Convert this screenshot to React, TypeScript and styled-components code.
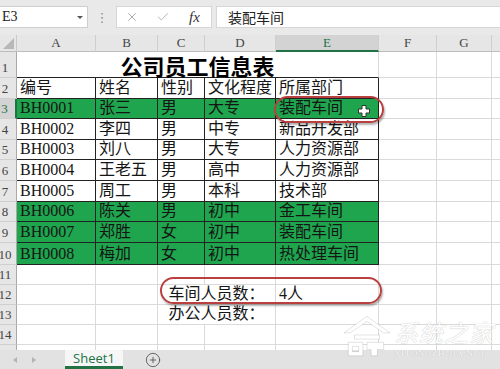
import React from "react";
import styled, { createGlobalStyle } from "styled-components";
import { X, Check, CirclePlus } from "lucide-react";

const GlobalStyle = createGlobalStyle`
	html, body {
		margin: 0;
		padding: 0;
		background: #fff;
	}
	body {
		font-family: "Liberation Serif", "Noto Sans CJK SC", serif;
	}
`;

const Window = styled.div`
	position: relative;
	width: 500px;
	height: 369px;
	display: flex;
	flex-direction: column;
	overflow: hidden;
	background: #fff;
`;

// ---------- formula bar ----------
const FormulaBar = styled.div`
	height: 35px;
	flex-shrink: 0;
	box-sizing: border-box;
	padding-top: 6px;
	background: #e9e9e9;
	display: flex;
	align-items: flex-start;
`;

const NameBox = styled.div`
	width: 88px;
	height: 22px;
	box-sizing: border-box;
	background: #fff;
	border: 1px solid #cfcfcf;
	border-left: 0;
	display: flex;
	align-items: center;
	justify-content: space-between;
	padding: 0 4px 0 2px;
	font-size: 14px;
	color: #222;
`;

const DropArrow = styled.span`
	width: 0;
	height: 0;
	border-left: 3px solid transparent;
	border-right: 3px solid transparent;
	border-top: 3px solid #555;
`;

const Grip = styled.div`
	width: 28px;
	height: 22px;
	display: flex;
	align-items: center;
	justify-content: center;
	color: #8a8a8a;
	font-size: 13px;
	font-family: "DejaVu Sans", sans-serif;
`;

const FxBox = styled.div`
	width: 96px;
	height: 22px;
	box-sizing: border-box;
	background: #fff;
	border: 1px solid #d6d6d6;
	display: flex;
	align-items: center;
	padding-left: 8px;
	gap: 17px;
	color: #9a9a9a;
`;

const FxLabel = styled.span`
	font-family: "Liberation Serif", serif;
	font-style: italic;
	font-size: 15px;
	color: #333;
	margin-left: 2px;
`;

const FormulaInput = styled.div`
	flex: 1;
	height: 22px;
	margin-left: 4px;
	box-sizing: border-box;
	background: #fff;
	border: 1px solid #d6d6d6;
	border-right: 0;
	display: flex;
	align-items: center;
	padding-left: 11px;
	font-size: 14px;
	font-family: "Noto Sans CJK SC", sans-serif;
	color: #222;
`;

// ---------- sheet ----------
const SheetArea = styled.div`
	position: relative;
	flex: 1;
	overflow: hidden;
`;

const Grid = styled.div`
	display: grid;
	grid-template-columns: 17px 79px 62px 47px 71px 103px 58px 55px 60px;
	grid-template-rows: 17px 26px 21px 20px 21px 20px 21px 21px 20px 21px 22px 20px 20px 20px 20px 20px;
`;

const Corner = styled.div`
	position: relative;
	background: #e6e6e6;
	border-right: 1px solid #c9c9c9;
	border-bottom: 1px solid #bdbdbd;
	box-sizing: border-box;
	&::after {
		content: "";
		position: absolute;
		right: 2px;
		bottom: 2px;
		border-left: 11px solid transparent;
		border-bottom: 11px solid #b8b8b8;
	}
`;

const ColHead = styled.div<{ $active?: boolean }>`
	box-sizing: border-box;
	background: ${(p) => (p.$active ? "#d3d3d3" : "#e6e6e6")};
	border-right: 1px solid #cfcfcf;
	border-bottom: ${(p) => (p.$active ? "2px solid #217346" : "1px solid #bdbdbd")};
	display: flex;
	align-items: center;
	justify-content: center;
	font-size: 13px;
	color: ${(p) => (p.$active ? "#217346" : "#444")};
`;

const RowHead = styled.div<{ $active?: boolean }>`
	box-sizing: border-box;
	background: ${(p) => (p.$active ? "#d3d3d3" : "#e6e6e6")};
	border-right: ${(p) => (p.$active ? "2px solid #217346" : "1px solid #a9a9a9")};
	border-bottom: 1px solid #cfcfcf;
	display: flex;
	align-items: flex-end;
	justify-content: center;
	padding: 0 6px 1px 0;
	font-size: 13px;
	line-height: 16px;
	color: ${(p) => (p.$active ? "#217346" : "#444")};
`;

const Cell = styled.div<{ $span?: number; $boxed?: boolean; $green?: boolean; $center?: boolean }>`
	grid-column: span ${(p) => p.$span ?? 1};
	box-sizing: border-box;
	min-width: 0;
	border-right: 1px solid ${(p) => (p.$boxed ? "#222" : "#dadada")};
	border-bottom: 1px solid ${(p) => (p.$boxed ? "#222" : "#dadada")};
	background: ${(p) => (p.$green ? "#1ea54e" : "#fff")};
	display: flex;
	align-items: flex-end;
	justify-content: ${(p) => (p.$center ? "center" : "flex-start")};
	padding: 0 3px 1px;
	font-size: 16px;
	line-height: 18px;
	white-space: nowrap;
	color: #151515;
`;

const TitleCell = styled.div`
	grid-column: span 5;
	box-sizing: border-box;
	border-right: 1px solid #dadada;
	border-bottom: 1px solid #222;
	display: flex;
	align-items: flex-end;
	justify-content: center;
	font-family: "Noto Sans CJK SC", sans-serif;
	font-weight: 700;
	font-size: 22px;
	line-height: 24px;
	color: #000;
`;

const Ring = styled.div<{ $x: number; $y: number; $w: number; $h: number }>`
	position: absolute;
	left: ${(p) => p.$x}px;
	top: ${(p) => p.$y}px;
	width: ${(p) => p.$w}px;
	height: ${(p) => p.$h}px;
	box-sizing: border-box;
	border: 2px solid #b9403f;
	border-radius: 14px;
	box-shadow: 1px 2px 2px rgba(0, 0, 0, 0.3);
	pointer-events: none;
`;

const Cursor = styled.svg`
	position: absolute;
	left: 358px;
	top: 70px;
`;

// ---------- tabs ----------
const TabBar = styled.div`
	height: 19px;
	flex-shrink: 0;
	background: #e2e2e2;
	display: flex;
	align-items: stretch;
`;

const NavArrows = styled.div`
	width: 65px;
	display: flex;
	align-items: center;
	padding-left: 13px;
	gap: 15px;
	box-sizing: border-box;
`;

const Tri = styled.span<{ $dir: "left" | "right" }>`
	width: 0;
	height: 0;
	border-top: 3px solid transparent;
	border-bottom: 3px solid transparent;
	${(p) => (p.$dir === "left" ? "border-right: 4px solid #b4b4b4;" : "border-left: 4px solid #b4b4b4;")}
`;

const SheetTab = styled.div`
	width: 58px;
	box-sizing: border-box;
	background: #f6f6f6;
	border-bottom: 3px solid #217346;
	display: flex;
	align-items: center;
	justify-content: center;
	font-family: "Open Sans", "Liberation Sans", sans-serif;
	font-size: 13px;
	color: #217346;
`;

const AddSheet = styled.div`
	width: 60px;
	display: flex;
	align-items: center;
	justify-content: center;
	color: #555;
`;

// ---------- watermark ----------
const Watermark = styled.div`
	position: absolute;
	left: 342px;
	top: 314px;
	display: flex;
	align-items: flex-start;
	gap: 2px;
	color: #fff;
	pointer-events: none;
`;

const MarkText = styled.div`
	display: flex;
	flex-direction: column;
	padding-top: 5px;
`;

const MarkName = styled.span`
	font-family: "Noto Sans CJK SC", sans-serif;
	font-size: 24px;
	line-height: 26px;
	font-style: italic;
	letter-spacing: 1px;
	text-shadow: 0 0 1px rgba(0, 0, 0, 0.35);
`;

const MarkUrl = styled.span`
	font-family: "Liberation Serif", serif;
	font-size: 9px;
	letter-spacing: 0.6px;
	margin-top: 3px;
	text-shadow: 0 0 1px rgba(0, 0, 0, 0.3);
`;

type Row = { n: number; cells: string[]; green?: boolean };

const header = ["编号", "姓名", "性别", "文化程度", "所属部门"];

const rows: Row[] = [
	{ n: 3, cells: ["BH0001", "张三", "男", "大专", "装配车间"], green: true },
	{ n: 4, cells: ["BH0002", "李四", "男", "中专", "新品开发部"] },
	{ n: 5, cells: ["BH0003", "刘八", "男", "大专", "人力资源部"] },
	{ n: 6, cells: ["BH0004", "王老五", "男", "高中", "人力资源部"] },
	{ n: 7, cells: ["BH0005", "周工", "男", "本科", "技术部"] },
	{ n: 8, cells: ["BH0006", "陈关", "男", "初中", "金工车间"], green: true },
	{ n: 9, cells: ["BH0007", "郑胜", "女", "初中", "装配车间"], green: true },
	{ n: 10, cells: ["BH0008", "梅加", "女", "初中", "热处理车间"], green: true },
];

// the H header sits past the window edge, so its letter is not drawn
const letters = ["A", "B", "C", "D", "E", "F", "G", ""];

const Blank = ({ count }: { count: number }) => (
	<>
		{Array.from({ length: count }).map((_, i) => (
			<Cell key={i} />
		))}
	</>
);

export default function App() {
	return (
		<>
			<GlobalStyle />
			<Window>
				<FormulaBar>
					<NameBox>
						<span>E3</span>
						<DropArrow />
					</NameBox>
					<Grip>⋮</Grip>
					<FxBox>
						<X size={14} strokeWidth={1.4} />
						<Check size={14} strokeWidth={1.6} color="#b0b0b0" />
						<FxLabel>fx</FxLabel>
					</FxBox>
					<FormulaInput>装配车间</FormulaInput>
				</FormulaBar>

				<SheetArea>
					<Grid>
						<Corner />
						{letters.map((l, i) => (
							<ColHead key={i} $active={l === "E"}>
								{l}
							</ColHead>
						))}

						<RowHead>1</RowHead>
						<TitleCell>公司员工信息表</TitleCell>
						<Blank count={3} />

						<RowHead>2</RowHead>
						{header.map((h) => (
							<Cell key={h} $boxed>
								{h}
							</Cell>
						))}
						<Blank count={3} />

						{rows.map((r) => (
							<React.Fragment key={r.n}>
								<RowHead $active={r.n === 3}>{r.n}</RowHead>
								{r.cells.map((c, i) => (
									<Cell key={i} $boxed $green={r.green}>
										{c}
									</Cell>
								))}
								<Blank count={3} />
							</React.Fragment>
						))}

						<RowHead>11</RowHead>
						<Blank count={8} />

						<RowHead>12</RowHead>
						<Blank count={2} />
						<Cell $span={2} $center>
							车间人员数：
						</Cell>
						<Cell>4人</Cell>
						<Blank count={3} />

						<RowHead>13</RowHead>
						<Blank count={2} />
						<Cell $span={2} $center>
							办公人员数：
						</Cell>
						<Blank count={4} />

						<RowHead>14</RowHead>
						<Blank count={8} />

						<RowHead>15</RowHead>
						<Blank count={8} />
					</Grid>

					<Ring $x={274} $y={61} $w={110} $h={27} />
					<Ring $x={160} $y={242} $w={222} $h={27} />
					<Cursor width="12" height="12" viewBox="0 0 12 12">
						<polygon
							points="4,0.5 8,0.5 8,4 11.5,4 11.5,8 8,8 8,11.5 4,11.5 4,8 0.5,8 0.5,4 4,4"
							fill="#fff"
							stroke="#333"
							strokeWidth="1"
						/>
					</Cursor>
				</SheetArea>

				<TabBar>
					<NavArrows>
						<Tri $dir="left" />
						<Tri $dir="right" />
					</NavArrows>
					<SheetTab>Sheet1</SheetTab>
					<AddSheet>
						<CirclePlus size={16} strokeWidth={1.3} />
					</AddSheet>
				</TabBar>

				<Watermark>
					<svg width="50" height="44" viewBox="0 0 48 42">
						<g fill="#fff" stroke="rgba(0,0,0,0.18)" strokeWidth="0.6">
							<path d="M24 2 L46 18 L40 18 L24 7 L8 18 L2 18 Z" />
							<path d="M12 20 L36 20 L36 24 L12 24 Z" />
							<path d="M6 27 L20 27 L20 40 L6 40 Z M10 31 L10 36 L16 36 L16 31 Z" />
							<path d="M24 27 L40 27 L40 34 L34 34 L34 40 L28 40 L28 34 L24 34 Z" />
						</g>
					</svg>
					<MarkText>
						<MarkName>系统之家</MarkName>
						<MarkUrl>XITONGZHIJIA.NET</MarkUrl>
					</MarkText>
				</Watermark>
			</Window>
		</>
	);
}
